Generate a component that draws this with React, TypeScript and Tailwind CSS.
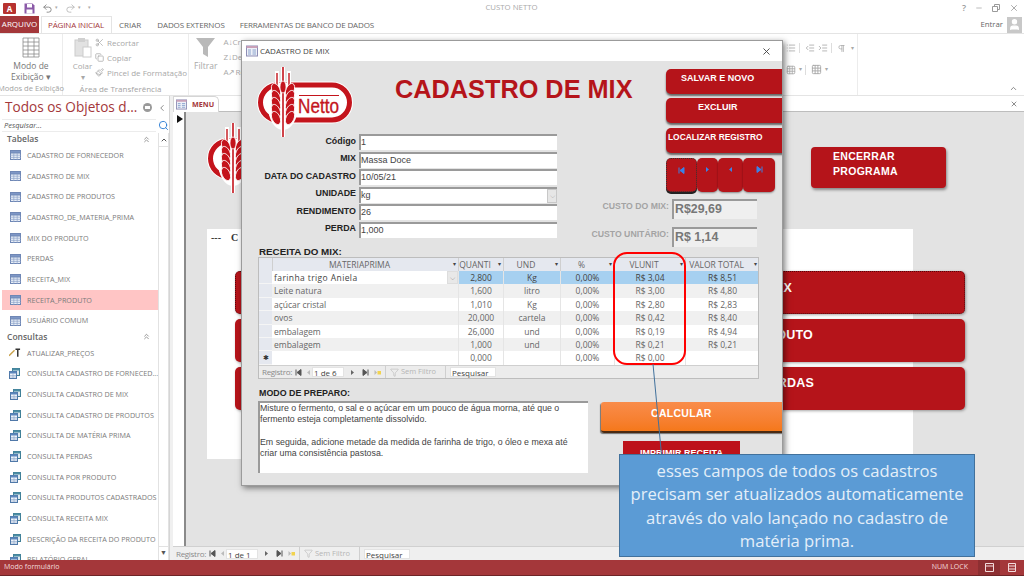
// App.tsx
import {
  Undo2,
  Redo2,
  X,
  Minus,
  Search,
  Scissors,
  Copy,
  Paintbrush,
  Filter,
  ChevronsUp,
  ChevronLeft,
  List,
  IndentIncrease,
  IndentDecrease,
  Pilcrow,
  Grid3x3,
  ChevronUp,
  User,
} from "lucide-react";

const RED = "#c4141c";

function Logo() {
  const rows = [24, 31, 38, 45, 52];
  return (
    <svg width="96" height="72" viewBox="0 0 96 72">
      <rect x="1.5" y="17" width="93" height="39" rx="19.5" fill="#fff" stroke="#fff" strokeWidth="3" />
      <rect x="3.5" y="19" width="89" height="35" rx="17.5" fill="#fff" stroke={RED} strokeWidth="5" />
      <path d="M42 29.5H82" stroke={RED} strokeWidth="1" />
      <text x="41" y="47" fill={RED} fontSize="21" fontWeight="400" stroke={RED} strokeWidth="0.35" textLength="41" lengthAdjust="spacingAndGlyphs" fontFamily="'Liberation Sans Narrow','Liberation Sans',sans-serif">
        Netto
      </text>
      <path d="M26 1V71M20 5V24M32 5V24" stroke="#fff" strokeWidth="4" />
      <ellipse cx="26" cy="40" rx="15" ry="24" fill="#fff" />
      <path d="M26 1V71" stroke={RED} strokeWidth="1.6" />
      <path d="M20 7V26M32 7V26" stroke={RED} strokeWidth="1.4" />
      {rows.map((y) => (
        <g key={y}>
          <ellipse cx="19" cy={y} rx="4" ry="7" fill={RED} stroke="#fff" strokeWidth="0.8" transform={`rotate(-24 19 ${y})`} />
          <ellipse cx="33" cy={y} rx="4" ry="7" fill={RED} stroke="#fff" strokeWidth="0.8" transform={`rotate(24 33 ${y})`} />
        </g>
      ))}
      <ellipse cx="26" cy="21" rx="3" ry="6" fill={RED} stroke="#fff" strokeWidth="0.7" />
    </svg>
  );
}

function TableIcon() {
  return (
    <svg width="11" height="10" viewBox="0 0 11 10" className="shrink-0">
      <rect x="0.5" y="0.5" width="10" height="9" fill="#e8eef7" stroke="#6f87b5" />
      <rect x="0.5" y="0.5" width="10" height="2.5" fill="#7e97c6" stroke="#6f87b5" />
      <path d="M0 5.2H11M0 7.4H11M3.8 3V10M7.2 3V10" stroke="#8ea3c9" strokeWidth="0.7" />
    </svg>
  );
}

function QueryIcon() {
  return (
    <svg width="11" height="11" viewBox="0 0 11 11" className="shrink-0">
      <rect x="3.5" y="0.5" width="7" height="7" fill="#dfeaf0" stroke="#3f7f96" />
      <rect x="3.5" y="0.5" width="7" height="2" fill="#4b8ca3" />
      <rect x="0.5" y="3.5" width="7" height="7" fill="#eef3fa" stroke="#4f78a8" />
      <rect x="0.5" y="3.5" width="7" height="2" fill="#5b86bb" />
      <path d="M1 7.5H7M1 9H7M4 5.5V10" stroke="#8aa5c8" strokeWidth="0.6" />
    </svg>
  );
}

function FormIcon({ size = 12 }: { size?: number }) {
  return (
    <svg width={size} height={size} viewBox="0 0 12 12" className="shrink-0">
      <rect x="0.5" y="1" width="11" height="10" fill="#eef0f8" stroke="#8d8db5" />
      <rect x="0.5" y="1" width="11" height="2" fill="#c9a0b8" />
      <path d="M2 5H5M2 7H5M2 9H5" stroke="#7d9ac8" strokeWidth="0.9" />
      <path d="M6.5 5H10M6.5 7H10M6.5 9H10" stroke="#7d9ac8" strokeWidth="0.9" />
    </svg>
  );
}

function NavGlyph({ kind, color = "#555" }: { kind: "first" | "prev" | "next" | "last" | "new"; color?: string }) {
  return (
    <svg width="7" height="7" viewBox="0 0 7 7" className="shrink-0">
      {kind === "first" && <path d="M1 0.5V6.5M6 0.5V6.5L2 3.5Z" stroke={color} fill={color} strokeWidth="1" />}
      {kind === "prev" && <path d="M5 1V6L2 3.5Z" fill={color} />}
      {kind === "next" && <path d="M2 1V6L5 3.5Z" fill={color} />}
      {kind === "last" && <path d="M6 0.5V6.5M1 0.5V6.5L5 3.5Z" stroke={color} fill={color} strokeWidth="1" />}
      {kind === "new" && (
        <>
          <path d="M0.5 1V6L3 3.5Z" fill={color} />
          <rect x="3.5" y="2" width="3.5" height="3.5" fill="#f2d34f" />
        </>
      )}
    </svg>
  );
}

function RecordBar({ record }: { record: string }) {
  return (
    <div className="flex items-center h-full text-[8px] text-[#8a8a8a] font-['Open_Sans',sans-serif]">
      <span className="w-[32px] pl-[1px] whitespace-nowrap tracking-[-0.3px]">Registro:</span>
      <span className="w-[11px] flex justify-center"><NavGlyph kind="first" /></span>
      <span className="w-[8px] flex justify-center"><NavGlyph kind="prev" color="#bbb" /></span>
      <span className="w-[32px] h-[10px] bg-white border border-[#e3e3e3] text-[#444] leading-[9px] pl-[1px] text-[8px] whitespace-nowrap">{record}</span>
      <span className="w-[16px] flex justify-center"><NavGlyph kind="next" color="#666" /></span>
      <span className="w-[11px] flex justify-center"><NavGlyph kind="last" /></span>
      <span className="w-[12px] flex justify-center"><NavGlyph kind="new" color="#bbb" /></span>
      <span className="flex items-center justify-end gap-[2px] w-[61px] pr-[9px] h-full border-x border-[#cfcfcf] text-[#b5b5b5] whitespace-nowrap ml-[2px] text-[7.5px]">
        <Filter size={9} strokeWidth={1.5} />
        Sem Filtro
      </span>
      <span className="ml-[4px] w-[46px] h-[10px] bg-white border border-[#e3e3e3] text-[#444] leading-[9px] pl-[1px] whitespace-nowrap">Pesquisar</span>
    </div>
  );
}

const tabelas = [
  "CADASTRO DE FORNECEDOR",
  "CADASTRO DE MIX",
  "CADASTRO DE PRODUTOS",
  "CADASTRO_DE_MATERIA_PRIMA",
  "MIX DO PRODUTO",
  "PERDAS",
  "RECEITA_MIX",
  "RECEITA_PRODUTO",
  "USUÁRIO COMUM",
];

const consultas = [
  "CONSULTA CADASTRO DE FORNECED...",
  "CONSULTA CADASTRO DE MIX",
  "CONSULTA CADASTRO DE PRODUTOS",
  "CONSULTA DE MATÉRIA PRIMA",
  "CONSULTA PERDAS",
  "CONSULTA POR PRODUTO",
  "CONSULTA PRODUTOS CADASTRADOS",
  "CONSULTA RECEITA MIX",
  "DESCRIÇÃO DA RECEITA DO PRODUTO",
  "RELATÓRIO GERAL",
];

const receita = [
  ["farinha trigo Aniela", "2,800", "Kg", "0,00%", "R$ 3,04", "R$ 8,51"],
  ["Leite natura", "1,600", "litro", "0,00%", "R$ 3,00", "R$ 4,80"],
  ["açúcar cristal", "1,010", "Kg", "0,00%", "R$ 2,80", "R$ 2,83"],
  ["ovos", "20,000", "cartela", "0,00%", "R$ 0,42", "R$ 8,40"],
  ["embalagem", "26,000", "und", "0,00%", "R$ 0,19", "R$ 4,94"],
  ["embalagem", "1,000", "und", "0,00%", "R$ 0,21", "R$ 0,21"],
  ["", "0,000", "", "0,00%", "R$ 0,00", ""],
];

const campos = [
  { label: "Código", value: "1" },
  { label: "MIX", value: "Massa Doce" },
  { label: "DATA DO CADASTRO", value: "10/05/21" },
  { label: "UNIDADE", value: "kg", combo: true },
  { label: "RENDIMENTO", value: "26" },
  { label: "PERDA", value: "1,000" },
];

const gridCols = "grid grid-cols-[13px_186px_45px_57px_54px_71px_74px]";

function SideRow({ label, active, icon }: { label: string; active?: boolean; icon: React.ReactNode }) {
  return (
    <div className={`flex items-center h-[20.67px] pl-[7px] gap-[6px] shrink-0 ${active ? "bg-[#ffc5c5]" : ""}`}>
      <span className="w-[12px] flex justify-center">{icon}</span>
      <span className="text-[7.2px] text-[#7b7b7b] whitespace-nowrap">{label}</span>
    </div>
  );
}

function SideGroup({ label }: { label: string }) {
  return (
    <div className="flex items-center justify-between h-[12px] pl-[5px] pr-[7px] shrink-0">
      <span className="text-[8.5px] font-semibold text-[#666]">{label}</span>
      <ChevronsUp size={9} className="text-[#777]" />
    </div>
  );
}

function Sidebar() {
  return (
    <div className="w-[170px] shrink-0 flex flex-col pl-[2px] border-r border-[#d5d5d5] overflow-hidden font-['Open_Sans',sans-serif]">
      <div className="flex items-center h-[23px] shrink-0">
        <span className="text-[13.6px] text-[#a4373a] pl-[3px] whitespace-nowrap">Todos os Objetos d...</span>
        <span className="ml-[6px] w-[9px] h-[9px] rounded-full bg-[#9a9a9a] shrink-0 flex items-center justify-center">
          <span className="w-[5px] h-[3px] bg-white" />
        </span>
        <ChevronLeft size={10} className="ml-[5px] text-[#777]" />
      </div>
      <div className="flex items-center h-[13px] shrink-0">
        <span className="w-[155px] h-[13px] bg-white border-y border-[#ececec] text-[7.5px] italic text-[#555] leading-[11px] pl-[2px]">Pesquisar...</span>
        <Search size={11} className="ml-[2px] text-[#2b7cd3]" />
      </div>
      <div className="flex flex-1 min-h-0 mt-[1px]">
        <div className="w-[157px] flex flex-col overflow-hidden">
          <SideGroup label="Tabelas" />
          {tabelas.map((t) => (
            <SideRow key={t} label={t} active={t === "RECEITA_PRODUTO"} icon={<TableIcon />} />
          ))}
          <SideGroup label="Consultas" />
          <SideRow
            label="ATUALIZAR_PREÇOS"
            icon={
              <svg width="13" height="10" viewBox="0 0 13 10">
                <path d="M0 8L6 2" stroke="#c9a14a" strokeWidth="1.5" />
                <path d="M7 1H12M9.5 1V9" stroke="#333" strokeWidth="1.6" />
              </svg>
            }
          />
          {consultas.map((c) => (
            <SideRow key={c} label={c} icon={<QueryIcon />} />
          ))}
        </div>
        <div className="w-[11px] flex flex-col border-x border-[#e2e2e2] items-center">
          <span className="h-[13px] flex items-center text-[#555]"><ChevronUp size={8} strokeWidth={3} /></span>
          <span className="flex-1 w-full border-y border-[#e2e2e2]" />
          <span className="h-[13px] flex items-center text-[7px] text-[#555]">▼</span>
        </div>
      </div>
    </div>
  );
}

function Ribbon() {
  return (
    <div className="h-[63px] flex shrink-0 border-y border-[#e4e4e4] text-[#a8a8a8] font-['Open_Sans',sans-serif] text-[8px] relative">
      <div className="w-[63px] border-r border-[#ececec] flex flex-col items-center pt-[3px]">
        <svg width="20" height="21" viewBox="0 0 20 21" className="text-[#8c8c8c]">
          <path d="M2 1H18V20H2ZM2 5H18M2 9H18M2 13H18M2 17H18M7 1V20M13 1V20" fill="none" stroke="currentColor" strokeWidth="0.8" />
        </svg>
        <div className="text-[#777] text-center text-[8.5px] leading-[11px] mt-[2px] flex-1">
          Modo de
          <br />
          Exibição ▾
        </div>
        <div className="text-[7.6px] text-[#a3a3a3] leading-[11px] pb-[1px] whitespace-nowrap">Modos de Exibição</div>
      </div>
      <div className="w-[126px] border-r border-[#ececec] flex flex-col pt-[3px]">
        <div className="flex flex-1">
          <div className="w-[31px] ml-[4px] flex flex-col items-center">
            <svg width="20" height="21" viewBox="0 0 20 21">
              <rect x="2" y="3" width="13" height="16" fill="#e2e2e2" stroke="#ccc" />
              <rect x="5" y="1" width="7" height="4" fill="#d0d0d0" />
              <rect x="10" y="10" width="8" height="10" fill="#fff" stroke="#ccc" />
            </svg>
            <div className="text-center leading-[11px] mt-[2px]">Colar<br />▾</div>
          </div>
          <div className="flex flex-col gap-[4px] ml-[-3px] leading-[11px]">
            {[
              { icon: <Scissors size={9} />, label: "Recortar" },
              { icon: <Copy size={9} />, label: "Copiar" },
              { icon: <Paintbrush size={9} />, label: "Pincel de Formatação" },
            ].map((r) => (
              <div key={r.label} className="flex items-center gap-[3px] whitespace-nowrap">
                {r.icon}
                {r.label}
              </div>
            ))}
          </div>
        </div>
        <div className="text-[8px] text-[#a3a3a3] leading-[11px] pb-[1px] pr-[10px] text-center whitespace-nowrap">Área de Transferência</div>
      </div>
      <div className="w-[52px] flex pl-[5px] pt-[3px] gap-[6px] shrink-0">
        <div className="flex flex-col items-center">
          <svg width="19" height="21" viewBox="0 0 19 21">
            <path d="M0 1H19L12 10V20L7 17V10Z" fill="#b9b9b9" />
          </svg>
          <span className="mt-[2px] text-[8.5px] leading-[11px]">Filtrar</span>
        </div>
        <div className="flex flex-col gap-[5px] leading-[10px] text-[8px]">
          <span>A↓Cr</span>
          <span>Z↓De</span>
          <span>A↗Re</span>
        </div>
      </div>
      <div className="ml-[542px] w-[75px] border-r border-[#ececec] flex flex-col gap-[11px] pt-[9px] pl-[3px] shrink-0">
        <div className="flex items-center gap-[3px]">
          <List size={10} />
          <span className="w-px h-[10px] bg-[#ddd]" />
          <IndentDecrease size={10} className="ml-[2px]" />
          <IndentIncrease size={10} />
          <span className="w-px h-[10px] bg-[#ddd]" />
          <Pilcrow size={9} className="ml-[2px]" />
          <span className="text-[6px] ml-[2px]">▾</span>
        </div>
        <div className="flex items-center gap-[3px]">
          <Grid3x3 size={10} />
          <span className="text-[6px]">▾</span>
          <span className="w-px h-[10px] bg-[#ddd]" />
          <Grid3x3 size={11} className="ml-[2px]" />
          <span className="text-[6px]">▾</span>
        </div>
      </div>
      <ChevronUp size={9} className="absolute right-[6px] bottom-[2px] text-[#666]" />
    </div>
  );
}

function BackgroundForm() {
  const botoes = [
    { label: "CADASTRO DE MIX", cls: "pr-[172px] border border-dotted border-[#55080c]" },
    { label: "CADASTRO DE PRODUTO", cls: "pr-[152px]" },
    { label: "CONTROLE DE PERDAS", cls: "pr-[151px]" },
  ];
  return (
    <div className="flex-1 flex flex-col min-h-0 bg-[#e3e3e3] pl-[21px]">
      <div className="h-[117px] flex shrink-0">
        <div className="w-[96px] mt-[10px]"><Logo /></div>
        <div className="ml-[508px] mt-[35px] w-[135px] h-[41px] bg-[#b5141a] rounded-[4px] shadow-[1px_2px_3px_rgba(0,0,0,0.4)] text-white font-bold text-[10.5px] leading-[15px] pl-[22px] pt-[2px] font-['Liberation_Sans',sans-serif] tracking-[0.3px]">
          ENCERRAR
          <br />
          PROGRAMA
        </div>
      </div>
      <div className="w-[706px] h-[230px] bg-white pl-[28px] pt-[3px]">
        <div className="text-[10px] text-[#333] leading-[12px] -ml-[24px] font-bold font-['Liberation_Serif',serif] flex gap-[10px]">
          <span>---</span>
          <span>C</span>
        </div>
        <div className="flex flex-col gap-[5px] mt-[27px] w-[730px]">
          {botoes.map((b) => (
            <div key={b.label} className={`h-[43px] bg-[#b5141a] rounded-[5px] shadow-[1px_1px_3px_rgba(0,0,0,0.35)] text-right text-white font-bold text-[12.5px] pt-[7px] font-['Liberation_Sans',sans-serif] tracking-[0.2px] whitespace-nowrap ${b.cls}`}>
              {b.label}
            </div>
          ))}
        </div>
      </div>
    </div>
  );
}

function Cadastro() {
  return (
    <div className="absolute left-[241px] top-[40px] w-[542px] h-[446px] bg-[#e3e3e3] flex flex-col overflow-hidden border border-[#9b9b9b] shadow-[2px_2px_6px_rgba(0,0,0,0.5)] font-['Liberation_Sans',sans-serif] z-10">
      <div className="h-[20px] bg-white flex items-center px-[4px] gap-[1px] shrink-0 font-['Open_Sans',sans-serif]">
        <FormIcon />
        <span className="text-[8px] text-[#444] ml-[1px]">CADASTRO DE MIX</span>
        <X size={11} className="ml-auto mr-[6px] text-[#444]" />
      </div>

      <div className="grid grid-cols-[343px_75px_122px] grid-rows-[73px_61px_52px] shrink-0">
        <div className="col-span-2 flex pl-[15px] pt-[5px]">
          <Logo />
          <h1 className="ml-[42px] mt-[8px] text-[25.3px] leading-[30px] font-black text-[#b5141a] whitespace-nowrap">CADASTRO DE MIX</h1>
        </div>

        <div className="row-span-2 col-start-3 row-start-1 pl-[6px] pt-[8px] flex flex-col text-white font-bold text-[9px]">
          <div className="h-[25px] -mr-[10px] rounded-l-[5px] bg-[#b5141a] shadow-[0_2px_2px_rgba(0,0,0,0.55)] pl-[15px] leading-[18px]">SALVAR E NOVO</div>
          <div className="h-[25px] -mr-[10px] rounded-l-[5px] bg-[#b5141a] shadow-[0_2px_2px_rgba(0,0,0,0.55)] mt-[4px] pl-[32px] leading-[19px]">EXCLUIR</div>
          <div className="h-[25px] -mr-[10px] rounded-l-[5px] bg-[#b5141a] shadow-[0_2px_2px_rgba(0,0,0,0.55)] mt-[5px] pl-[2px] leading-[19px] whitespace-nowrap text-[8.4px]">LOCALIZAR REGISTRO</div>
          <div className="flex h-[34px] mt-[5px] w-[109px]">
            {[
              { kind: "first" as const, w: "w-[31px]", cls: "border border-dotted border-[#333] shadow-[0_2px_0_#222] z-10" },
              { kind: "next" as const, w: "w-[21px]", cls: "shadow-[0_1px_2px_rgba(0,0,0,0.4)]" },
              { kind: "prev" as const, w: "w-[25px]", cls: "shadow-[0_1px_2px_rgba(0,0,0,0.4)]" },
              { kind: "last" as const, w: "w-[32px]", cls: "shadow-[0_1px_2px_rgba(0,0,0,0.4)]" },
            ].map((n) => (
              <div key={n.kind} className={`${n.w} ${n.cls} h-full bg-[#b5141a] rounded-[5px] flex justify-center pt-[8px]`}>
                <NavGlyph kind={n.kind} color="#3b82e6" />
              </div>
            ))}
          </div>
        </div>

        <div className="row-start-2 row-span-2 flex flex-col gap-[1.5px]">
          {campos.map((c) => (
            <div key={c.label} className="flex items-center h-[16px]">
              <span className="w-[114px] text-right text-[8.9px] leading-[13px] font-bold text-[#222] whitespace-nowrap -mt-[2px]">{c.label}</span>
              <span className="ml-[3px] w-[198px] h-[16px] bg-white border-t-2 border-l-2 border-[#9a9a9a] text-[9px] text-[#444] leading-[12px] flex justify-between">
                {c.value}
                {c.combo && (
                  <span className="w-[10px] h-[14px] bg-[#e6e6e6] border border-[#c8c8c8] text-[7px] text-[#777] flex items-center justify-center">⌵</span>
                )}
              </span>
            </div>
          ))}
        </div>

        <div className="row-start-3 col-start-2 col-span-2 flex flex-col gap-[8px] pt-[4px]">
          {[
            { label: "CUSTO DO MIX:", value: "R$29,69" },
            { label: "CUSTO UNITÁRIO:", value: "R$ 1,14" },
          ].map((c) => (
            <div key={c.label} className="flex items-center">
              <span className="w-[84px] text-right text-[8.7px] leading-[12px] font-bold text-[#a3a3a3] whitespace-nowrap -mt-[6px]">{c.label}</span>
              <span className="ml-[3px] w-[85px] h-[20px] bg-[#efefef] border-t-2 border-l-2 border-[#9a9a9a] text-[12.4px] leading-[16px] font-bold text-[#777] pl-[1px]">{c.value}</span>
            </div>
          ))}
        </div>
      </div>

      <div className="text-[9.8px] leading-[10px] font-bold text-[#222] pl-[17px] shrink-0">RECEITA DO MIX:</div>

      <div className="ml-[16px] w-[501px] h-[122px] border border-[#bdbdbd] bg-white shrink-0 flex flex-col overflow-hidden font-['Open_Sans',sans-serif] text-[8.5px] text-[#666]">
        <div className={`${gridCols} h-[13px] bg-[#e5e8ef] text-[#666] shrink-0 leading-[13px]`}>
          <span />
          {["MATERIAPRIMA", "QUANTI", "UND", "%", "VLUNIT", "VALOR TOTAL"].map((h) => (
            <span key={h} className="relative text-center border-l border-[#cfcfcf] whitespace-nowrap pr-[12px]">
              {h}
              <span className="absolute right-[2px] top-0 text-[6px] text-[#444]">▾</span>
            </span>
          ))}
        </div>
        {receita.map((r, i) => (
          <div key={i} className={`${gridCols} h-[13.4px] leading-[13px] shrink-0 ${i === 0 ? "text-[#444] font-medium" : ""} ${i % 2 === 1 ? "bg-[#f0f0f0]" : "bg-white"}`}>
            <span className="bg-[#e5e8ef] border-b border-[#f5f5f5] text-[7px] text-center text-[#333] leading-[13px]">{i === 6 ? "✱" : ""}</span>
            <span className={`pl-[2px] flex justify-between whitespace-nowrap ${i === 0 ? "tracking-[0.4px]" : ""}`}>
              {r[0]}
              {i === 0 && <span className="w-[11px] h-[13px] bg-[#e8e8e8] border border-[#ddd] text-[7px] text-center leading-[11px]">⌵</span>}
            </span>
            <span className={`text-center border-l border-[#e5e5e5] ${i === 0 ? "bg-[#a6d0f0]" : ""}`}>{r[1]}</span>
            <span className={`text-center border-l border-[#e5e5e5] ${i === 0 ? "bg-[#a6d0f0]" : ""}`}>{r[2]}</span>
            <span className={`text-center border-l border-[#e5e5e5] ${i === 0 ? "bg-[#a6d0f0]" : ""}`}>{r[3]}</span>
            <span className={`text-center border-l border-[#e5e5e5] ${i === 0 ? "bg-[#a6d0f0]" : ""}`}>{r[4]}</span>
            <span className={`text-center border-l border-[#e5e5e5] ${i === 0 ? "bg-[#a6d0f0]" : ""}`}>{r[5]}</span>
          </div>
        ))}
        <div className="mt-auto h-[13px] bg-[#ececec] border-t border-[#cfcfcf] pl-[2px] shrink-0">
          <RecordBar record="1 de 6" />
        </div>
      </div>

      <div className="flex mt-[9px] pl-[16px]">
        <div className="flex flex-col w-[330px]">
          <div className="text-[8.9px] leading-[10px] font-bold text-[#222] pl-[1px] h-[13px]">MODO DE PREPARO:</div>
          <div className="h-[72px] bg-white border-t-2 border-l-2 border-[#9a9a9a] text-[8.8px] leading-[11.3px] text-[#444] whitespace-nowrap">
            Misture o fermento, o sal e o açúcar em um pouco de água morna, até que o
            <br />
            fermento esteja completamente dissolvido.
            <br />
            <br />
            Em seguida, adicione metade da medida de farinha de trigo, o óleo e mexa até
            <br />
            criar uma consistência pastosa.
          </div>
        </div>
        <div className="flex flex-col pl-[13px] pt-[14px] flex-1 min-w-0">
          <div className="h-[31px] -mr-[10px] rounded-l-[3px] bg-gradient-to-b from-[#f98c4a] to-[#f57819] border-b-2 border-[#4a2a12] shadow-[-1px_1px_1px_rgba(0,0,0,0.5)] text-white font-bold text-[10.5px] pl-[50px] pt-[4px] tracking-[0.3px]">CALCULAR</div>
          <div className="ml-[22px] mt-[8px] w-[117px] h-[30px] bg-[#bd121a] text-white font-bold text-[9px] text-center pt-[6px] whitespace-nowrap">IMPRIMIR RECEITA</div>
        </div>
      </div>
    </div>
  );
}

export default function App() {
  return (
    <div className="relative w-[1024px] h-[576px] overflow-hidden bg-white flex flex-col font-['Open_Sans',sans-serif]">
      {/* barra de titulo */}
      <div className="h-[16px] flex items-center shrink-0 relative">
        <span className="ml-[3px] w-[13px] h-[11px] bg-[#b7322f] rounded-[1px] text-white text-[8px] font-bold leading-[11px] text-center">A</span>
        <svg width="11" height="11" viewBox="0 0 11 11" className="ml-[8px]">
          <path d="M0.5 0.5H8.5L10.5 2.5V10.5H0.5Z" fill="#8b5aa8" />
          <rect x="3" y="1" width="5" height="3.5" fill="#fff" />
          <rect x="2.5" y="6.5" width="6" height="4" fill="#fff" />
        </svg>
        <Undo2 size={11} className="ml-[7px] text-[#888]" />
        <span className="text-[5px] text-[#aaa] ml-[2px]">▾</span>
        <Redo2 size={11} className="ml-[7px] text-[#bbb]" />
        <span className="text-[5px] text-[#aaa] ml-[2px]">▾</span>
        <span className="text-[5px] text-[#aaa] ml-[7px]">▾</span>
        <span className="absolute left-0 right-[1px] text-center text-[7.8px] text-[#aaa]">CUSTO NETTO</span>
        <div className="ml-auto flex items-center gap-[9px] pr-[5px] text-[#9a9a9a]">
          <span className="text-[9px] font-semibold">?</span>
          <Minus size={8} />
          <svg width="8" height="8" viewBox="0 0 8 8">
            <path d="M0.5 2.5H5.5V7.5H0.5ZM2.5 2.5V0.5H7.5V5.5H5.5" fill="none" stroke="currentColor" />
          </svg>
          <X size={10} />
        </div>
      </div>

      {/* abas */}
      <div className="h-[17px] flex items-center shrink-0 text-[8px] text-[#666] relative">
        <span className="w-[39px] h-full bg-[#a4373a] text-white text-center leading-[16px]">ARQUIVO</span>
        <span className="ml-[2px] pl-[6px] h-full bg-white border-x border-t border-[#e4e4e4] text-[#a4373a] leading-[15px] whitespace-nowrap w-[71px] tracking-[-0.15px]">PÁGINA INICIAL</span>
        <span className="ml-[7px]">CRIAR</span>
        <span className="ml-[16px] tracking-[-0.1px]">DADOS EXTERNOS</span>
        <span className="ml-[15px] tracking-[-0.15px]">FERRAMENTAS DE BANCO DE DADOS</span>
        <span className="ml-auto text-[7.8px] mr-[4px]">Entrar</span>
        <span className="w-[15px] h-[16px] bg-[#c8c8c8] mr-[2px] flex items-center justify-center text-white"><User size={13} fill="#fff" /></span>
      </div>

      <Ribbon />

      {/* corpo */}
      <div className="flex flex-1 min-h-0">
        <Sidebar />
        <div className="w-[3px] bg-[#f0f0f0] shrink-0" />
        <div className="flex-1 min-w-0 flex flex-col">
          <div className="h-[16px] flex items-end border-b border-[#bdbdbd] shrink-0 relative">
            <div className="w-[46px] h-[16px] flex items-center gap-[5px] pl-[2px] border-x border-t border-[#d5d5d5] rounded-tr-[5px] bg-white -mb-px">
              <FormIcon size={11} />
              <span className="text-[7.2px] font-bold text-[#a4373a]">MENU</span>
            </div>
            <X size={8} className="absolute right-[6px] top-[4px] text-[#555]" />
          </div>
          <div className="flex flex-1 min-h-0">
            <div className="w-[13px] border-r-2 border-[#8a8a8a] shrink-0 pl-[4px] pt-[3px]">
              <svg width="6" height="8" viewBox="0 0 6 8"><path d="M0 0V8L6 4Z" fill="#111" /></svg>
            </div>
            <BackgroundForm />
          </div>
          <div className="h-[14px] bg-[#efefef] border-t border-[#d0d0d0] pl-[2px] shrink-0">
            <RecordBar record="1 de 1" />
          </div>
        </div>
      </div>

      {/* barra de status */}
      <div className="h-[16px] bg-[#a4373a] flex items-center pl-[4px] text-[7px] text-[#f3dcdc] shrink-0 border-b border-[#6e2426]">
        Modo formulário
        <span className="ml-auto">NUM LOCK</span>
        <span className="ml-[10px] w-[22px] h-full bg-[#8d2f32] flex items-center justify-center">
          <svg width="9" height="9" viewBox="0 0 9 9"><path d="M0.5 0.5H8.5V8.5H0.5ZM0.5 3H8.5" fill="none" stroke="#f3dcdc" /></svg>
        </span>
        <span className="w-[24px] flex justify-center">
          <svg width="8" height="9" viewBox="0 0 8 9"><path d="M0.5 0.5H7.5V8.5H0.5ZM0.5 3H7.5M0.5 6H7.5" fill="none" stroke="#f3dcdc" /></svg>
        </span>
      </div>

      <Cadastro />

      {/* anotacao */}
      <div className="absolute left-[613px] top-[252px] w-[73px] h-[113px] rounded-[14px] border-2 border-[#ff0000] z-20" />
      <svg className="absolute left-[650px] top-[364px] z-20" width="16" height="96" viewBox="0 0 16 96">
        <path d="M3 0L12 96" stroke="#41719c" strokeWidth="1" />
      </svg>
      <div className="absolute left-[619px] top-[454px] w-[356px] h-[103px] z-20 bg-[#5b9bd5] border border-[#41719c] text-[#e4eff9] text-[16.6px] leading-[23.3px] text-center pt-[4px] flex flex-col">
        <span>esses campos de todos os cadastros</span>
        <span className="whitespace-nowrap">precisam ser atualizados automaticamente</span>
        <span>através do valo lançado no cadastro de</span>
        <span>matéria prima.</span>
      </div>
    </div>
  );
}
